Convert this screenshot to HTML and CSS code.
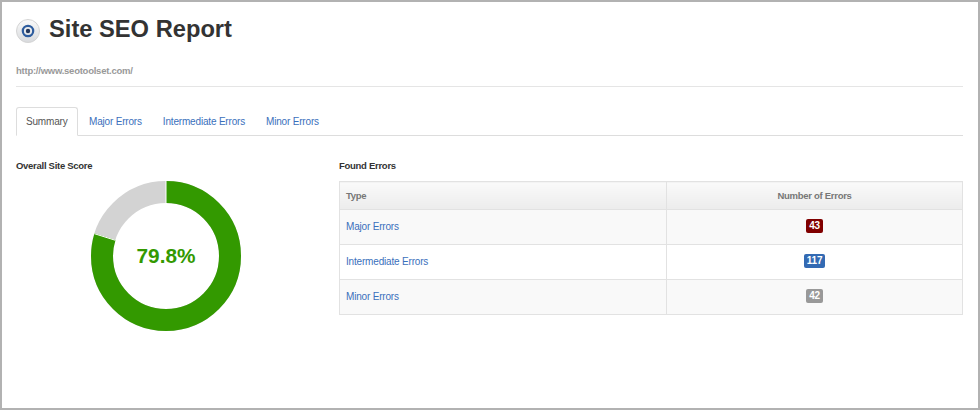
FILE: index.html
```html
<!DOCTYPE html>
<html lang="en">
<head>
<meta charset="utf-8">
<title>Site SEO Report</title>
<link rel="stylesheet" href="styles.css">
</head>
<body>
<div class="frame">
  <header class="title-row">
    <span class="title-icon"><svg viewBox="0 0 24 24" width="24" height="24"><defs><linearGradient id="g" x1="0" y1="0" x2="0" y2="1"><stop offset="0" stop-color="#fafafa"/><stop offset="1" stop-color="#d8dadd"/></linearGradient></defs><circle cx="12" cy="12" r="11.5" fill="url(#g)" stroke="#d4d4d4"/><circle cx="12" cy="12" r="5.2" fill="none" stroke="#2d5c9e" stroke-width="2.2"/><circle cx="12" cy="12" r="2.2" fill="#23375c"/></svg></span>
    <h1 class="title">Site SEO Report</h1>
  </header>
  <div class="url">http://www.seotoolset.com/</div>
  <nav class="tabs">
    <a class="tab active">Summary</a>
    <a class="tab">Major Errors</a>
    <a class="tab">Intermediate Errors</a>
    <a class="tab">Minor Errors</a>
  </nav>
  <div class="content">
    <section class="score">
      <h2 class="label">Overall Site Score</h2>
      <div class="donut">
        <svg viewBox="0 0 150 150" width="150" height="150"><circle cx="75" cy="75" r="64" fill="none" stroke="#d3d3d3" stroke-width="22"/><circle cx="75" cy="75" r="64" fill="none" stroke="#339900" stroke-width="22" stroke-dasharray="320.9 81.2" transform="rotate(-90 75 75)"/><path d="M75 0V22M3.4 52.7L24.4 59.3" stroke="#fff" stroke-width="1" fill="none"/></svg>
        <span class="donut-value">79.8%</span>
      </div>
    </section>
    <section class="errors">
      <h2 class="label">Found Errors</h2>
      <table class="table">
        <thead><tr><th class="col-type">Type</th><th class="col-num">Number of Errors</th></tr></thead>
        <tbody>
          <tr class="odd"><td><a>Major Errors</a></td><td class="num"><span class="badge major">43</span></td></tr>
          <tr><td><a>Intermediate Errors</a></td><td class="num"><span class="badge mid">117</span></td></tr>
          <tr class="odd"><td><a>Minor Errors</a></td><td class="num"><span class="badge minor">42</span></td></tr>
        </tbody>
      </table>
    </section>
  </div>
</div>
</body>
</html>
```
FILE: styles.css
```css
* { box-sizing: border-box; }
html, body { margin: 0; padding: 0; background: #fff; }
body { font-family: "Liberation Sans", Arial, sans-serif; color: #333; }
.frame { width: 980px; height: 410px; border: 2px solid #b2b2b2; padding: 0 15px 0 14px; overflow: hidden; }
.title-row { display: flex; align-items: center; gap: 9px; height: 40px; margin-top: 7px; }
.title-icon { display: flex; width: 24px; height: 24px; margin-top: 3px; }
.title { margin: 0; font-size: 23.7px; line-height: 40px; font-weight: bold; color: #333; }
.url { margin-top: 14px; height: 24px; line-height: 15px; font-size: 9.5px; letter-spacing: -0.25px; font-weight: bold; color: #999; border-bottom: 1px solid #e5e5e5; }
.tabs { display: flex; margin-top: 20px; height: 29px; border-bottom: 1px solid #ddd; }
.tab { height: 29px; padding: 0 9px 0 10px; line-height: 27px; font-size: 10px; letter-spacing: -0.18px; color: #3a70bc; border: 1px solid transparent; }
.tab.active { padding: 0 9px; width: 62px; color: #555; background: #fff; border-color: #ddd #ddd #fff; border-radius: 3px 3px 0 0; }
.content { display: flex; margin-top: 24px; }
.score { width: 323px; }
.errors { width: 624px; }
.label { margin: 0; font-size: 9.5px; letter-spacing: -0.28px; line-height: 12px; font-weight: bold; color: #333; }
.donut { position: relative; width: 150px; height: 150px; margin: 9px 0 0 75px; }
.donut svg { display: block; }
.donut-value { position: absolute; inset: 0; display: flex; align-items: center; justify-content: center; font-size: 20.8px; font-weight: bold; color: #339900; }
.table { width: 624px; margin-top: 9px; border-collapse: collapse; table-layout: fixed; font-size: 10px; letter-spacing: -0.18px; }
.table th, .table td { border: 1px solid #e2e2e2; }
.table th { height: 28px; padding: 0 6px 1px; font-size: 9.5px; letter-spacing: -0.28px; font-weight: bold; color: #777; background: linear-gradient(#fafafa, #ececec); border-bottom: 0; }
.col-type { width: 327px; text-align: left; }
.col-num { text-align: center; }
.table td { height: 35px; padding: 0 6px 2px; background: #fff; }
.table tr.odd td { background: #f9f9f9; }
.table a { color: #3a70bc; }
.num { text-align: center; }
.badge { display: inline-block; min-width: 17px; height: 14px; padding: 0 3px; border-radius: 2px; font-size: 10px; letter-spacing: -0.2px; line-height: 14px; font-weight: bold; color: #fff; text-align: center; vertical-align: middle; }
.major { background: #800000; }
.mid { background: #336ab3; }
.minor { background: #999; }
```
